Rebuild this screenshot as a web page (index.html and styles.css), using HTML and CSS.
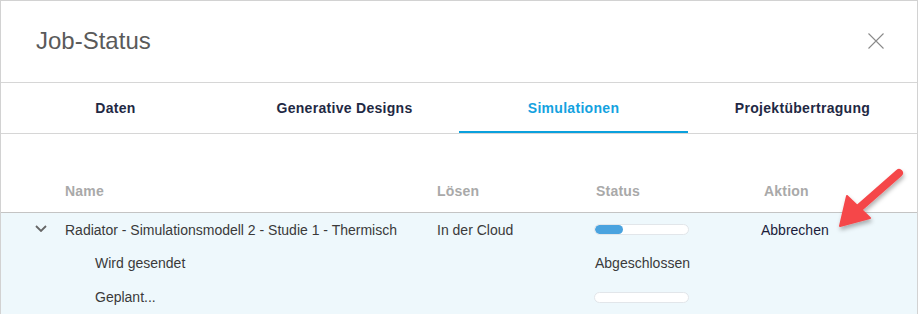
FILE: index.html
```html
<!DOCTYPE html>
<html lang="de">
<head>
  <meta charset="UTF-8">
  <title>Job-Status</title>
  <link rel="stylesheet" href="styles.css">
</head>
<body>
  <div class="dialog">
    <header class="dialog-header">
      <h1 class="dialog-title">Job-Status</h1>
      <button class="close-btn" aria-label="Schließen">
        <svg width="16" height="16" viewBox="0 0 16 16"><path d="M0.5 0.5 L15.5 15.5 M15.5 0.5 L0.5 15.5" stroke="#8a8a8a" stroke-width="1.1" fill="none"/></svg>
      </button>
    </header>

    <!-- Tabs -->
    <nav class="tabs">
      <div class="tab">Daten</div>
      <div class="tab">Generative Designs</div>
      <div class="tab active">Simulationen</div>
      <div class="tab">Projektübertragung</div>
    </nav>

    <!-- Job table -->
    <div class="job-table">
      <div class="table-head">
        <span></span>
        <span>Name</span>
        <span>Lösen</span>
        <span class="status-head">Status</span>
        <span class="action-head">Aktion</span>
      </div>
      <div class="rows">
        <div class="job-row">
          <span class="chevron">
            <svg width="12" height="7" viewBox="0 0 12 7"><path d="M1 1 L6 6 L11 1" stroke="#666" stroke-width="1.8" fill="none"/></svg>
          </span>
          <span>Radiator - Simulationsmodell 2 - Studie 1 - Thermisch</span>
          <span>In der Cloud</span>
          <span><div class="progress"><div class="progress-fill" style="width: 30%"></div></div></span>
          <span class="action">Abbrechen</span>
        </div>
        <div class="job-row sub-row">
          <span></span>
          <span class="sub-name">Wird gesendet</span>
          <span></span>
          <span>Abgeschlossen</span>
          <span></span>
        </div>
        <div class="job-row sub-row">
          <span></span>
          <span class="sub-name">Geplant...</span>
          <span></span>
          <span><div class="progress"></div></span>
          <span></span>
        </div>
      </div>
    </div>

    <!-- annotation arrow -->
    <svg class="callout" width="80" height="70" viewBox="830 165 80 70">
      <defs>
        <filter id="shadow" x="-20%" y="-20%" width="150%" height="150%">
          <feDropShadow dx="1" dy="3" stdDeviation="2" flood-color="#000" flood-opacity="0.3"/>
        </filter>
      </defs>
      <g fill="#f5474a" stroke="#f5474a" filter="url(#shadow)">
        <line x1="899" y1="173" x2="858" y2="209" stroke-width="8" stroke-linecap="round"/>
        <polygon points="840,226 847,196 870,218" stroke-width="2" stroke-linejoin="round"/>
      </g>
    </svg>
  </div>
</body>
</html>
```

FILE: styles.css
```css
* {
  margin: 0;
  padding: 0;
  box-sizing: border-box;
}

body {
  font-family: "Liberation Sans", Arial, sans-serif;
  background: #ffffff;
  color: #3a3a3a;
}

.dialog {
  position: relative;
  width: 918px;
  height: 314px;
  border: 1px solid #d2d2d2;
  border-bottom: none;
  overflow: hidden;
}

.dialog-header {
  height: 82px;
  border-bottom: 1px solid #d6d6d6;
  display: flex;
  align-items: center;
  justify-content: space-between;
  padding: 0 33px 0 35px;
}

.dialog-title {
  font-size: 24px;
  font-weight: normal;
  color: #5a5a5a;
  margin-top: -2px;
}

.close-btn {
  background: none;
  border: none;
  width: 16px;
  height: 16px;
  display: flex;
  margin-top: -2px;
}

.tabs {
  display: grid;
  grid-template-columns: repeat(4, 1fr);
  height: 51px;
  border-bottom: 1px solid #d6d6d6;
}

.tab {
  display: flex;
  align-items: center;
  justify-content: center;
  font-size: 14px;
  font-weight: bold;
  color: #1f2944;
  letter-spacing: 0.3px;
}

.tab.active {
  color: #14a2df;
  box-shadow: inset 0 -2px 0 #0aa0dd;
}

.table-head,
.job-row {
  display: grid;
  grid-template-columns: 64px 372px 158px 166px 1fr;
  font-size: 14px;
}

.table-head {
  height: 79px;
  align-items: end;
  padding-bottom: 13px;
  border-bottom: 1px solid #c4c4c4;
  font-weight: bold;
  color: #a9a9a9;
  letter-spacing: 0.2px;
}

.status-head {
  padding-left: 1px;
}

.action-head {
  padding-left: 3px;
}

.rows {
  background: #eef8fc;
  height: 200px;
}

.job-row {
  height: 33px;
  align-items: center;
}

.sub-row {
  height: 34px;
}

.sub-name {
  padding-left: 30px;
}

.chevron {
  display: flex;
  justify-content: flex-start;
  padding-left: 34px;
  margin-top: -3px;
}

.action {
  color: #1b1c3a;
}

.progress {
  width: 95px;
  height: 11px;
  margin-left: -1px;
  background: #ffffff;
  border: 1px solid #e2e6ea;
  border-radius: 6px;
  overflow: hidden;
}

.progress-fill {
  height: 100%;
  background: #4aa3df;
  border-radius: 6px;
}

.callout {
  position: absolute;
  left: 829px;
  top: 164px;
}
```
